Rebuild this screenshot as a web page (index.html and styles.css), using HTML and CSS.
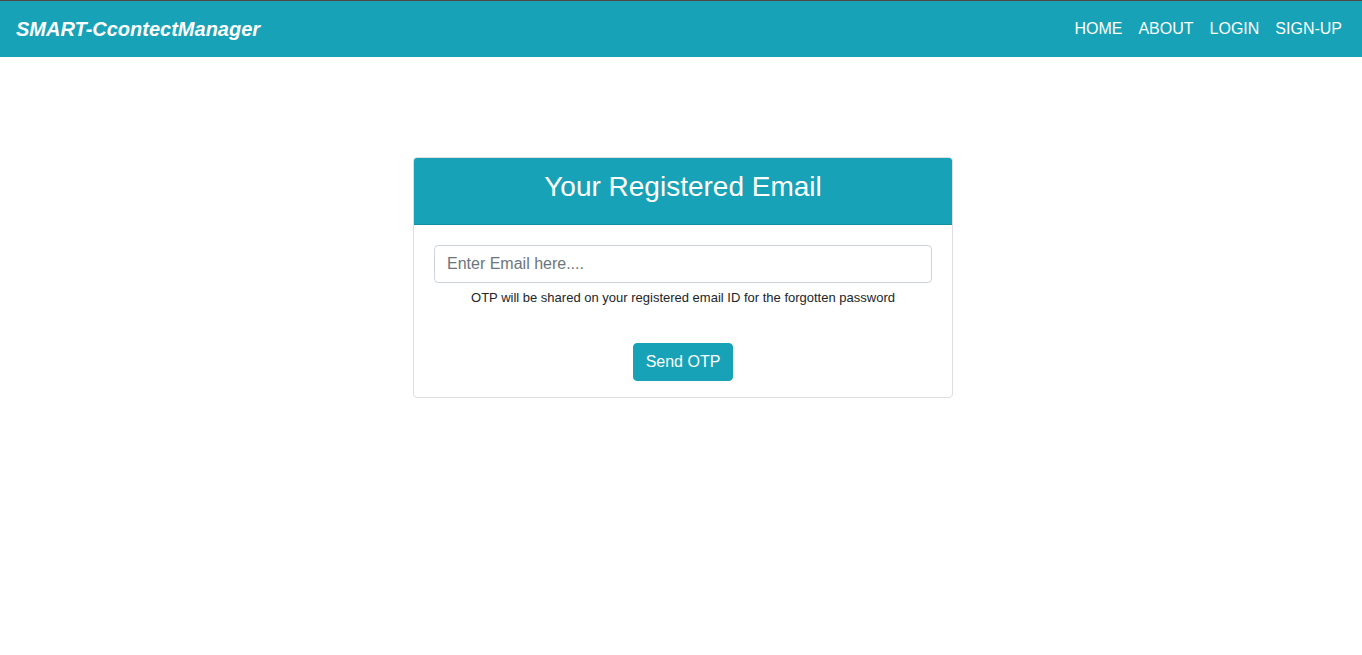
FILE: index.html
```html
<!DOCTYPE html>
<html lang="en">
<head>
<meta charset="utf-8">
<meta name="viewport" content="width=device-width, initial-scale=1">
<title>Forgot Password</title>
<link rel="stylesheet" href="styles.css">
</head>
<body>
<header class="navbar">
  <a class="brand" href="#">SMART-CcontectManager</a>
  <nav class="nav">
    <a class="nav-link" href="#">HOME</a>
    <a class="nav-link" href="#">ABOUT</a>
    <a class="nav-link" href="#">LOGIN</a>
    <a class="nav-link" href="#">SIGN-UP</a>
  </nav>
</header>
<main class="container">
  <section class="card">
    <div class="card-header">
      <h1 class="card-title">Your Registered Email</h1>
    </div>
    <form class="card-body">
      <input class="field" id="email" type="email" placeholder="Enter Email here...." aria-label="Email" aria-describedby="email-help">
      <p class="help" id="email-help">OTP will be shared on your registered email ID for the forgotten password</p>
      <button class="button" type="submit">Send OTP</button>
    </form>
  </section>
</main>
</body>
</html>
```
FILE: styles.css
```css
* {
  box-sizing: border-box;
}

body {
  margin: 0;
  background: #fff;
  color: #212529;
  font-family: "Liberation Sans", Arial, sans-serif;
  font-size: 16px;
  line-height: 24px;
}

.navbar {
  display: flex;
  align-items: center;
  justify-content: space-between;
  padding: 8px 12px 8px 16px;
  border-top: 1px solid #54474a;
  background: #17a2b8;
}

.brand {
  padding: 5px 0;
  color: #fff;
  font-size: 20px;
  font-style: italic;
  font-weight: bold;
  line-height: 30px;
  text-decoration: none;
}

.nav {
  display: flex;
}

.nav-link {
  padding: 8px;
  color: #fff;
  text-decoration: none;
}

.container {
  display: flex;
  justify-content: center;
  padding: 100px 15px 0 19px;
}

.card {
  width: 100%;
  max-width: 540px;
  border: 1px solid #dfdfdf;
  border-radius: 4px;
  overflow: hidden;
}

.card-header {
  padding: 12px 20px 20px;
  border-bottom: 1px solid #148ea1;
  background: #17a2b8;
  color: #fff;
  text-align: center;
}

.card-title {
  margin: 0;
  font-size: 28px;
  font-weight: normal;
  line-height: 34px;
}

.card-body {
  display: flex;
  flex-direction: column;
  align-items: center;
  padding: 20px 20px 16px;
}

.field {
  width: 100%;
  padding: 6px 12px;
  border: 1px solid #ced4da;
  border-radius: 4px;
  background: #fff;
  color: #495057;
  font: inherit;
}

.field::placeholder {
  color: #6c757d;
  opacity: 1;
}

.help {
  margin: 5px 0 35px;
  font-size: 13px;
  line-height: 20px;
  text-align: center;
}

.button {
  padding: 6px 12px;
  border: 1px solid #17a2b8;
  border-radius: 4px;
  background: #17a2b8;
  color: #fff;
  font: inherit;
  cursor: pointer;
}
```
